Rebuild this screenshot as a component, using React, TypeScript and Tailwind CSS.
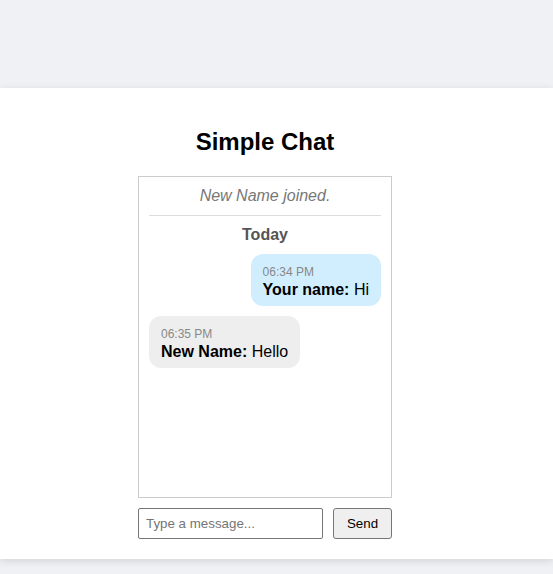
import React from "react";

export default function App() {
  return (
    <div className="min-h-[574px] bg-[#f0f1f5] pt-[88px]" style={{ fontFamily: '"Liberation Sans", Arial, sans-serif' }}>
      <div className="bg-white shadow-[0_2px_8px_rgba(0,0,0,0.12)] pt-[40px] pb-[20px]">
        <div className="w-[530px] flex flex-col items-center">
          <h1 className="text-[24px] font-bold leading-[28px] text-black">Simple Chat</h1>
          <div className="mt-[20px] w-[254px] h-[322px] border border-[#cccccc] px-[10px] pt-[10px] flex flex-col">
            <div className="text-center italic text-[16px] leading-[18px] text-[#777777] pb-[10px] border-b border-[#dddddd]">
              New Name joined.
            </div>
            <div className="text-center font-bold text-[16px] leading-[18px] text-[#555555] mt-[10px]">Today</div>
            <div className="mt-[10px] flex justify-end">
              <div className="bg-[#d1eeff] rounded-[12px] px-[12px] pt-[11px] pb-[6px]">
                <div className="text-[12px] leading-[14px] text-[#888888]">06:34 PM</div>
                <div className="mt-[1px] text-[16px] leading-[20px] text-black"><span className="font-bold">Your name:</span> Hi</div>
              </div>
            </div>
            <div className="mt-[10px] flex justify-start">
              <div className="bg-[#eeeeee] rounded-[12px] px-[12px] pt-[11px] pb-[6px]">
                <div className="text-[12px] leading-[14px] text-[#888888]">06:35 PM</div>
                <div className="mt-[1px] text-[16px] leading-[20px] text-black"><span className="font-bold">New Name:</span> Hello</div>
              </div>
            </div>
          </div>
          <div className="mt-[10px] w-[254px] flex gap-[10px]">
            <input
              placeholder="Type a message..."
              className="w-[185px] h-[31px] border border-[#767676] rounded-[2px] px-[7px] text-[13.33px] text-black placeholder:text-[#757575] outline-none"
              style={{ fontFamily: '"Liberation Sans", Arial, sans-serif' }}
            />
            <button className="w-[59px] h-[31px] border border-[#767676] rounded-[3px] bg-[#efefef] text-[13.33px] text-black">
              Send
            </button>
          </div>
        </div>
      </div>
    </div>
  );
}
